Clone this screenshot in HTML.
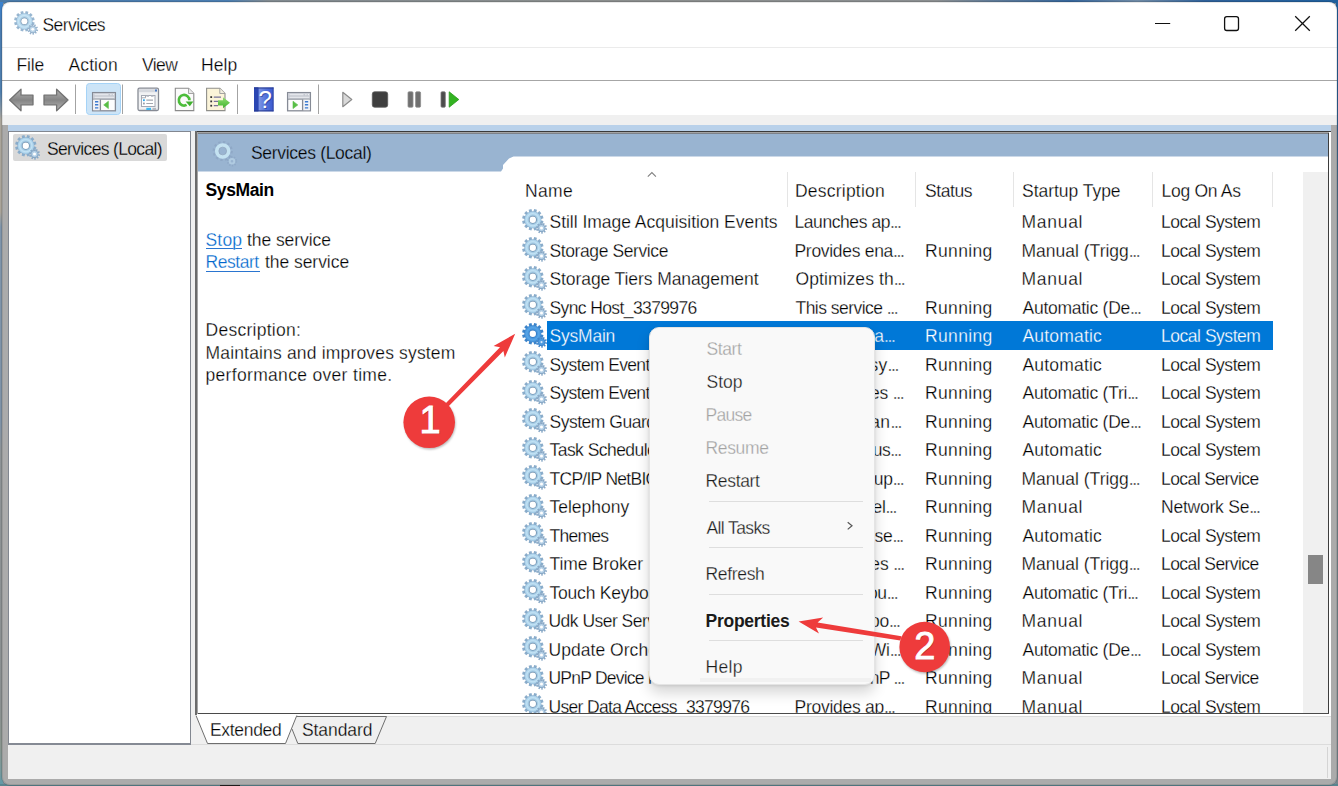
<!DOCTYPE html>
<html lang="en"><head><meta charset="utf-8"><title>Services</title>
<style>
html,body{margin:0;padding:0}
body{width:1338px;height:786px;overflow:hidden;position:relative;background:#7f8f9a;
 font-family:"Liberation Sans",sans-serif;font-size:17.5px;color:#000}
.a,.t,.gear{position:absolute}
.t{white-space:pre;line-height:20px;height:20px;-webkit-text-stroke:.26px #fff}
.m{-webkit-text-stroke-color:#f9f9f9}
.e{letter-spacing:-1.4px}
.u{}
#wpT{left:0;top:0;width:1338px;height:3px;background:linear-gradient(90deg,#4a7aa8 0,#4a7db0 17%,#80898f 20%,#8a8d8c 45%,#8a8e90 70%,#5f7a96 74%,#35659a 80%,#6f8aa5 85%,#2f6199 90%,#1f5f9c 100%)}
#wpL{left:0;top:2px;width:3px;height:784px;background:linear-gradient(180deg,#3a82cf 0,#4a7cb0 25px,#4f7fae 90px,#8796a3 108px,#aaa59b 118px,#aaa499 210px,#7f95ab 225px,#7f93a8 420px,#8e9396 450px,#8a8f90 700px,#8a968f 745px,#7a9a9c 768px,#5f99a8 784px)}
#wpR{left:1336px;top:0;width:2px;height:786px;background:linear-gradient(180deg,#1f5f9c 0,#2a5f92 100px,#4f6f88 200px,#76868c 400px,#76868c 786px)}
#wpB{left:0;top:784px;width:1338px;height:2px;background:#5a858f}
#win{left:0;top:0;width:1338px;height:786px;clip-path:inset(2px 1px 1px 2px round 8px)}
#winb{left:1px;top:1px;width:1337px;height:785px;border-radius:9px;background:rgba(0,0,0,.12)}
#wine{left:2px;top:2px;width:1335px;height:783px;border-radius:8px;border:1px solid rgba(0,0,0,.09);box-sizing:border-box}
</style></head><body>
<div class="a" id="wpT"></div><div class="a" id="wpL"></div><div class="a" id="wpR"></div><div class="a" id="wpB"></div>
<div class="a" style="left:220px;top:785px;width:20px;height:1px;background:#222"></div>
<div class="a" id="winb"></div>
<div class="a" id="win">
<!-- title, menu, toolbar -->
<div class="a" style="left:0;top:0;width:1338px;height:125px;background:#fff"></div>
<div class="a" style="left:0;top:47px;width:1338px;height:1px;background:#ebebeb"></div>
<div class="a" style="left:0;top:80px;width:1338px;height:1px;background:#a6a6a6"></div>
<div class="a" style="left:0;top:115px;width:1338px;height:10px;background:#f0f0f0"></div>
<!-- gray MDI frame -->
<div class="a" style="left:0;top:125px;width:1338px;height:661px;background:#ababab"></div>
<div class="a" style="left:8px;top:125px;width:1323px;height:654px;background:#f0f0f0"></div>
<div class="a" style="left:8px;top:125px;width:1323px;height:6px;background:#b9d1ea"></div>
<!-- tree pane -->
<div class="a" style="left:8px;top:131px;width:183px;height:614px;background:#fff;border:1px solid #828790;border-bottom:2px solid #858a94;box-sizing:border-box"></div>
<div class="a" style="left:13px;top:134px;width:154px;height:27px;background:#d9d9d9;border-radius:2px"></div>
<div class="a" style="left:386px;top:716px;width:945px;height:1px;background:#dcdcdc"></div>
<!-- status bar line -->
<div class="a" style="left:191px;top:744px;width:1140px;height:1px;background:#dcdcdc"></div>
<div class="a" style="left:1327px;top:747px;width:1px;height:31px;background:#d4d4d4"></div>
<!-- right pane -->
<div class="a" style="left:195px;top:131px;width:1136px;height:585px;background:#fff"></div>
<div class="a" style="left:195px;top:131px;width:1136px;height:1px;background:#3a3a3a"></div>
<div class="a" style="left:197px;top:132px;width:1132px;height:1px;background:#a3a3a3"></div>
<div class="a" style="left:198px;top:133px;width:1130px;height:1px;background:#7d828a"></div>
<div class="a" style="left:195px;top:131px;width:2px;height:584px;background:#6b6b6b"></div>
<div class="a" style="left:197px;top:132px;width:1px;height:582px;background:#a6a6a6"></div>
<div class="a" style="left:1328px;top:133px;width:1px;height:581px;background:#3d3d3d"></div>
<div class="a" style="left:198px;top:713px;width:1131px;height:1px;background:#4a4a4a"></div>
<!-- blue band -->
<svg class="a" style="left:198px;top:134px" width="1130" height="38" viewBox="0 0 1130 38"><path d="M0 0H1130V22.4H315.5L311 24.4L305 30.9V34.4L303 37.4H0Z" fill="#99b4d1"/></svg>
<!-- header -->
<div class="a" style="left:787px;top:172px;width:1px;height:35px;background:#e5e5e5"></div>
<div class="a" style="left:915px;top:172px;width:1px;height:35px;background:#e5e5e5"></div>
<div class="a" style="left:1013px;top:172px;width:1px;height:35px;background:#e5e5e5"></div>
<div class="a" style="left:1152px;top:172px;width:1px;height:35px;background:#e5e5e5"></div>
<div class="a" style="left:1272px;top:172px;width:1px;height:35px;background:#e5e5e5"></div>
<svg class="a" style="left:646px;top:171px" width="12" height="8" viewBox="0 0 12 8"><path d="M1.8 5.7L5.9 1.6L9.9 5.7" fill="none" stroke="#808080" stroke-width="1.1"/></svg>
<!-- scrollbar -->
<div class="a" style="left:1303px;top:172px;width:25px;height:541px;background:#f0f0f0"></div>
<div class="a" style="left:1308px;top:555px;width:15px;height:29px;background:#868686"></div>
<!-- selection -->
<div class="a" style="left:546.5px;top:321.3px;width:726px;height:28.5px;background:#0078d7"></div>
<div class="a" id="rows" style="left:0;top:0;width:1338px;height:713px;overflow:hidden">
<svg class="gear" style="left:522px;top:208.8px" width="26" height="26" viewBox="0 0 26 26"><use href="#gear"/></svg>
<svg class="gear" style="left:522px;top:237.3px" width="26" height="26" viewBox="0 0 26 26"><use href="#gear"/></svg>
<svg class="gear" style="left:522px;top:265.8px" width="26" height="26" viewBox="0 0 26 26"><use href="#gear"/></svg>
<svg class="gear" style="left:522px;top:294.3px" width="26" height="26" viewBox="0 0 26 26"><use href="#gear"/></svg>
<svg class="gear" style="left:522px;top:322.8px" width="26" height="26" viewBox="0 0 26 26"><use href="#gearS"/></svg>
<svg class="gear" style="left:522px;top:351.3px" width="26" height="26" viewBox="0 0 26 26"><use href="#gear"/></svg>
<svg class="gear" style="left:522px;top:379.8px" width="26" height="26" viewBox="0 0 26 26"><use href="#gear"/></svg>
<svg class="gear" style="left:522px;top:408.3px" width="26" height="26" viewBox="0 0 26 26"><use href="#gear"/></svg>
<svg class="gear" style="left:522px;top:436.8px" width="26" height="26" viewBox="0 0 26 26"><use href="#gear"/></svg>
<svg class="gear" style="left:522px;top:465.3px" width="26" height="26" viewBox="0 0 26 26"><use href="#gear"/></svg>
<svg class="gear" style="left:522px;top:493.8px" width="26" height="26" viewBox="0 0 26 26"><use href="#gear"/></svg>
<svg class="gear" style="left:522px;top:522.3px" width="26" height="26" viewBox="0 0 26 26"><use href="#gear"/></svg>
<svg class="gear" style="left:522px;top:550.8px" width="26" height="26" viewBox="0 0 26 26"><use href="#gear"/></svg>
<svg class="gear" style="left:522px;top:579.3px" width="26" height="26" viewBox="0 0 26 26"><use href="#gear"/></svg>
<svg class="gear" style="left:522px;top:607.8px" width="26" height="26" viewBox="0 0 26 26"><use href="#gear"/></svg>
<svg class="gear" style="left:522px;top:636.3px" width="26" height="26" viewBox="0 0 26 26"><use href="#gear"/></svg>
<svg class="gear" style="left:522px;top:664.8px" width="26" height="26" viewBox="0 0 26 26"><use href="#gear"/></svg>
<svg class="gear" style="left:522px;top:693.3px" width="26" height="26" viewBox="0 0 26 26"><use href="#gear"/></svg>
<div class="a" style="left:0;top:0;width:785px;height:713px;overflow:hidden">
<span class="t" style="left:549.5px;top:212.3px;letter-spacing:-0.02px;">Still Image Acquisition Events</span>
<span class="t" style="left:549.5px;top:240.8px;letter-spacing:-0.40px;">Storage Service</span>
<span class="t" style="left:549.5px;top:269.3px;letter-spacing:-0.09px;">Storage Tiers Management</span>
<span class="t" style="left:549.5px;top:297.8px;letter-spacing:-0.61px;">Sync Host_3379976</span>
<span class="t" style="left:549.5px;top:326.3px;letter-spacing:-0.21px;color:#fff;-webkit-text-stroke-color:#0078d7;">SysMain</span>
<span class="t" style="left:549.5px;top:354.8px;letter-spacing:-0.65px;">System Event</span>
<span class="t" style="left:549.5px;top:383.3px;letter-spacing:-0.65px;">System Event</span>
<span class="t" style="left:549.5px;top:411.8px;letter-spacing:-0.49px;">System Guard</span>
<span class="t" style="left:549.5px;top:440.3px;letter-spacing:-0.54px;">Task Schedule</span>
<span class="t" style="left:549.5px;top:468.8px;letter-spacing:-0.72px;">TCP/IP NetBIO</span>
<span class="t" style="left:549.5px;top:497.3px;letter-spacing:0.00px;">Telephony</span>
<span class="t" style="left:549.5px;top:525.8px;letter-spacing:-0.72px;">Themes</span>
<span class="t" style="left:549.5px;top:554.3px;letter-spacing:-0.11px;">Time Broker</span>
<span class="t" style="left:549.5px;top:582.8px;letter-spacing:-0.20px;">Touch Keyboa</span>
<span class="t" style="left:548.5px;top:611.3px;letter-spacing:-0.52px;">Udk User Serv</span>
<span class="t" style="left:548.5px;top:639.8px;letter-spacing:0.04px;">Update Orche</span>
<span class="t" style="left:548.5px;top:668.3px;letter-spacing:-0.77px;">UPnP Device H</span>
<span class="t" style="left:548.5px;top:696.8px;letter-spacing:-0.67px;">User Data Access_3379976</span>
</div>
<span class="t" style="left:794.5px;top:212.3px;letter-spacing:-0.43px;">Launches ap<span class="e">...</span></span>
<span class="t" style="left:1021.5px;top:212.3px;letter-spacing:0.72px;">Manual</span>
<span class="t" style="left:1161.0px;top:212.3px;letter-spacing:-0.47px;">Local System</span>
<span class="t" style="left:794.5px;top:240.8px;letter-spacing:-0.30px;">Provides ena<span class="e">...</span></span>
<span class="t" style="left:925.0px;top:240.8px;letter-spacing:0.36px;">Running</span>
<span class="t" style="left:1021.5px;top:240.8px;letter-spacing:0.00px;">Manual (Trigg<span class="e">...</span></span>
<span class="t" style="left:1161.0px;top:240.8px;letter-spacing:-0.47px;">Local System</span>
<span class="t" style="left:795.5px;top:269.3px;letter-spacing:0.08px;">Optimizes th<span class="e">...</span></span>
<span class="t" style="left:1021.5px;top:269.3px;letter-spacing:0.72px;">Manual</span>
<span class="t" style="left:1161.0px;top:269.3px;letter-spacing:-0.47px;">Local System</span>
<span class="t" style="left:795.5px;top:297.8px;letter-spacing:-0.53px;">This service <span class="e">...</span></span>
<span class="t" style="left:925.0px;top:297.8px;letter-spacing:0.36px;">Running</span>
<span class="t" style="left:1022.5px;top:297.8px;letter-spacing:-0.26px;">Automatic (De<span class="e">...</span></span>
<span class="t" style="left:1161.0px;top:297.8px;letter-spacing:-0.47px;">Local System</span>
<span class="t" style="left:794.5px;top:326.3px;letter-spacing:0.00px;color:#fff;-webkit-text-stroke-color:#0078d7;">Maintains a<span class="e">...</span></span>
<span class="t" style="left:925.0px;top:326.3px;letter-spacing:0.36px;color:#fff;-webkit-text-stroke-color:#0078d7;">Running</span>
<span class="t" style="left:1022.5px;top:326.3px;letter-spacing:0.18px;color:#fff;-webkit-text-stroke-color:#0078d7;">Automatic</span>
<span class="t" style="left:1161.0px;top:326.3px;letter-spacing:-0.47px;color:#fff;-webkit-text-stroke-color:#0078d7;">Local System</span>
<span class="t" style="left:794.5px;top:354.8px;letter-spacing:0.33px;">Monitors sy<span class="e">...</span></span>
<span class="t" style="left:925.0px;top:354.8px;letter-spacing:0.36px;">Running</span>
<span class="t" style="left:1022.5px;top:354.8px;letter-spacing:0.18px;">Automatic</span>
<span class="t" style="left:1161.0px;top:354.8px;letter-spacing:-0.47px;">Local System</span>
<span class="t" style="left:795.5px;top:383.3px;letter-spacing:-0.16px;">Coordinates <span class="e">...</span></span>
<span class="t" style="left:925.0px;top:383.3px;letter-spacing:0.36px;">Running</span>
<span class="t" style="left:1022.5px;top:383.3px;letter-spacing:-0.26px;">Automatic (Tri<span class="e">...</span></span>
<span class="t" style="left:1161.0px;top:383.3px;letter-spacing:-0.47px;">Local System</span>
<span class="t" style="left:794.5px;top:411.8px;letter-spacing:0.41px;">Monitors an<span class="e">...</span></span>
<span class="t" style="left:925.0px;top:411.8px;letter-spacing:0.36px;">Running</span>
<span class="t" style="left:1022.5px;top:411.8px;letter-spacing:-0.26px;">Automatic (De<span class="e">...</span></span>
<span class="t" style="left:1161.0px;top:411.8px;letter-spacing:-0.47px;">Local System</span>
<span class="t" style="left:794.5px;top:440.3px;letter-spacing:-0.45px;">Enables a us<span class="e">...</span></span>
<span class="t" style="left:925.0px;top:440.3px;letter-spacing:0.36px;">Running</span>
<span class="t" style="left:1022.5px;top:440.3px;letter-spacing:0.18px;">Automatic</span>
<span class="t" style="left:1161.0px;top:440.3px;letter-spacing:-0.47px;">Local System</span>
<span class="t" style="left:794.5px;top:468.8px;letter-spacing:-0.24px;">Provides sup<span class="e">...</span></span>
<span class="t" style="left:925.0px;top:468.8px;letter-spacing:0.36px;">Running</span>
<span class="t" style="left:1021.5px;top:468.8px;letter-spacing:0.00px;">Manual (Trigg<span class="e">...</span></span>
<span class="t" style="left:1161.0px;top:468.8px;letter-spacing:-0.57px;">Local Service</span>
<span class="t" style="left:794.5px;top:497.3px;letter-spacing:-0.33px;">Provides Tel<span class="e">...</span></span>
<span class="t" style="left:925.0px;top:497.3px;letter-spacing:0.36px;">Running</span>
<span class="t" style="left:1021.5px;top:497.3px;letter-spacing:0.72px;">Manual</span>
<span class="t" style="left:1161.0px;top:497.3px;letter-spacing:-0.23px;">Network Se<span class="e">...</span></span>
<span class="t" style="left:794.5px;top:525.8px;letter-spacing:-0.27px;">Provides use<span class="e">...</span></span>
<span class="t" style="left:925.0px;top:525.8px;letter-spacing:0.36px;">Running</span>
<span class="t" style="left:1022.5px;top:525.8px;letter-spacing:0.18px;">Automatic</span>
<span class="t" style="left:1161.0px;top:525.8px;letter-spacing:-0.47px;">Local System</span>
<span class="t" style="left:795.5px;top:554.3px;letter-spacing:-0.12px;">Coordinates <span class="e">...</span></span>
<span class="t" style="left:925.0px;top:554.3px;letter-spacing:0.36px;">Running</span>
<span class="t" style="left:1021.5px;top:554.3px;letter-spacing:0.00px;">Manual (Trigg<span class="e">...</span></span>
<span class="t" style="left:1161.0px;top:554.3px;letter-spacing:-0.57px;">Local Service</span>
<span class="t" style="left:794.5px;top:582.8px;letter-spacing:-0.34px;">Enables Tou<span class="e">...</span></span>
<span class="t" style="left:925.0px;top:582.8px;letter-spacing:0.36px;">Running</span>
<span class="t" style="left:1022.5px;top:582.8px;letter-spacing:-0.26px;">Automatic (Tri<span class="e">...</span></span>
<span class="t" style="left:1161.0px;top:582.8px;letter-spacing:-0.47px;">Local System</span>
<span class="t" style="left:795.5px;top:611.3px;letter-spacing:-0.26px;">Shell compo<span class="e">...</span></span>
<span class="t" style="left:925.0px;top:611.3px;letter-spacing:0.36px;">Running</span>
<span class="t" style="left:1021.5px;top:611.3px;letter-spacing:0.72px;">Manual</span>
<span class="t" style="left:1161.0px;top:611.3px;letter-spacing:-0.47px;">Local System</span>
<span class="t" style="left:794.5px;top:639.8px;letter-spacing:-0.20px;">Manages Wi<span class="e">...</span></span>
<span class="t" style="left:925.0px;top:639.8px;letter-spacing:0.36px;">Running</span>
<span class="t" style="left:1022.5px;top:639.8px;letter-spacing:-0.26px;">Automatic (De<span class="e">...</span></span>
<span class="t" style="left:1161.0px;top:639.8px;letter-spacing:-0.47px;">Local System</span>
<span class="t" style="left:796.5px;top:668.3px;letter-spacing:-0.72px;">Allows UPnP <span class="e">...</span></span>
<span class="t" style="left:925.0px;top:668.3px;letter-spacing:0.36px;">Running</span>
<span class="t" style="left:1021.5px;top:668.3px;letter-spacing:0.72px;">Manual</span>
<span class="t" style="left:1161.0px;top:668.3px;letter-spacing:-0.57px;">Local Service</span>
<span class="t" style="left:794.5px;top:696.8px;letter-spacing:-0.26px;">Provides ap<span class="e">...</span></span>
<span class="t" style="left:925.0px;top:696.8px;letter-spacing:0.36px;">Running</span>
<span class="t" style="left:1021.5px;top:696.8px;letter-spacing:0.72px;">Manual</span>
<span class="t" style="left:1161.0px;top:696.8px;letter-spacing:-0.47px;">Local System</span>
</div>
<!-- window controls -->
<svg class="a" style="left:1150px;top:10px" width="170" height="28" viewBox="1150 10 170 28" fill="none" stroke="#111" stroke-width="1.3">
<path d="M1155 23.5H1170.2" stroke-width="1.1"/>
<rect x="1224.6" y="16.6" width="13.9" height="13.9" rx="2.2"/>
<path d="M1295.2 16.2L1309.8 30.8M1309.8 16.2L1295.2 30.8" stroke-width="1.25"/>
</svg>
<!-- title icon -->
<svg class="a" style="left:14px;top:10.6px;opacity:.88" width="25" height="25" viewBox="0 0 26 26"><use href="#gear"/></svg>
<!-- tree icon -->
<svg class="a" style="left:15px;top:135px" width="26" height="26" viewBox="0 0 26 26"><use href="#gear"/></svg>
<!-- pane header icon -->
<svg class="a" style="left:210px;top:138px" width="30" height="30" viewBox="210 138 30 30" fill="none">
<circle cx="222.7" cy="151" r="9" stroke="#869fbd" stroke-opacity=".55" stroke-width="2.2" stroke-dasharray="2.3 2.41"/>
<circle cx="222.7" cy="151" r="5.8" stroke="#c4e2f1" stroke-width="3.9"/>
<circle cx="222.7" cy="151" r="3.9" stroke="#8c9fb8" stroke-opacity=".7" stroke-width=".9"/>
<circle cx="232" cy="161.3" r="4.3" stroke="#86a0bf" stroke-opacity=".55" stroke-width="1.8" stroke-dasharray="1.35 1.35"/>
<circle cx="232" cy="161.3" r="2.3" stroke="#b4cfe4" stroke-opacity=".85" stroke-width="2"/>
</svg>
<!-- toolbar -->
<svg class="a" style="left:0;top:81px" width="480" height="36" viewBox="0 81 480 36">
<defs>
<linearGradient id="ag" x1="0" y1="0" x2="0" y2="1"><stop offset="0" stop-color="#b2b2b2"/><stop offset=".5" stop-color="#858585"/><stop offset="1" stop-color="#b8b8b8"/></linearGradient>
<linearGradient id="hb" x1="0" y1="0" x2="1" y2="0"><stop offset="0" stop-color="#2a46b2"/><stop offset=".22" stop-color="#2a46b2"/><stop offset=".24" stop-color="#7d95e4"/><stop offset=".6" stop-color="#5573da"/><stop offset="1" stop-color="#3a59cf"/></linearGradient>
<linearGradient id="gr" x1="0" y1="0" x2="0" y2="1"><stop offset="0" stop-color="#92e070"/><stop offset="1" stop-color="#3fb12c"/></linearGradient>
</defs>
<!-- back / forward -->
<path d="M9.6 100L21 89.3V95.2H33V104.8H21V110.8Z" fill="url(#ag)" stroke="#727272" stroke-width="1.3" stroke-linejoin="round"/>
<path d="M68 100L56.6 89.3V95.2H44V104.8H56.6V110.8Z" fill="url(#ag)" stroke="#727272" stroke-width="1.3" stroke-linejoin="round"/>
<path d="M75.5 84.5V114M122.5 84.5V114M237.5 84.5V114M318.5 84.5V114" stroke="#a3a3a3" stroke-width="1"/>
<!-- selected show/hide tree button -->
<rect x="86.5" y="83.5" width="34" height="31" rx="3" fill="#cce4f7" stroke="#a5d3f7"/>
<g>
<rect x="92.6" y="92.6" width="22.8" height="18.2" fill="#fdfdfd" stroke="#868b96" stroke-width="1.3"/>
<rect x="93.2" y="93.2" width="21.6" height="5.6" fill="#c5c9d1"/><path d="M93 99.2H115" stroke="#868b96" stroke-width="1"/>
<path d="M94.5 94.7H108.5M94.5 97.3H114" stroke="#eef0f4" stroke-width="1.1"/><path d="M110.3 94.7H111.5M112.8 94.7H114" stroke="#eef0f4" stroke-width="1.3"/>
<rect x="93.2" y="99.7" width="6.6" height="10.5" fill="#f2f3f6"/><path d="M100.4 99.5V110.4" stroke="#868b96" stroke-width="1.3"/>
<path d="M95 101.7H98.3M95 104.8H98.3M95 107.9H98.3" stroke="#3b7ad0" stroke-width="1.4"/>
<path d="M108.4 101.2V108.6L103.7 104.9Z" fill="#58be46" stroke="#58be46" stroke-width=".6" stroke-linejoin="round"/>
</g>
<!-- properties window icon -->
<g>
<rect x="138" y="88.2" width="20.5" height="22.3" rx="1.5" fill="#f1f2f4" stroke="#868a94" stroke-width="1.3"/>
<rect x="139" y="89.2" width="18.5" height="3" fill="#d5d8de"/><rect x="155" y="89.5" width="2" height="2" fill="#4a7bc4"/>
<rect x="141.5" y="95.5" width="13.5" height="11" fill="#fff" stroke="#a4a8b3" stroke-width="1"/>
<path d="M141.5 97.8H145.5V95" stroke="#a4a8b3" fill="none"/>
<path d="M146.5 96.3H149M151 96.3H153.5" stroke="#c4c7cf" stroke-width="1.2"/>
<rect x="143" y="99.3" width="1.8" height="1.8" fill="#29a8ee"/><rect x="143" y="102.6" width="1.8" height="1.8" fill="#9aa0ab"/>
<path d="M146.3 100.2H153M146.3 103.5H153" stroke="#a3a7b0" stroke-width="1.2"/>
<rect x="146.3" y="107.8" width="4.7" height="2.2" fill="#3fb8f0"/><rect x="152.5" y="107.8" width="3.6" height="2.2" fill="#b4b7be"/>
</g>
<!-- refresh -->
<g>
<path d="M175.3 88.2H188.5L193.8 93.5V110.6H175.3Z" fill="#fbfbfb" stroke="#8b8b8b" stroke-width="1.1"/>
<path d="M188.5 88.2V93.5H193.8" fill="#e9e9e9" stroke="#9b9b9b" stroke-width=".9"/>
<path d="M189.4 100.2A5.3 5.3 0 1 0 186.6 104.9" fill="none" stroke="#4cbd3a" stroke-width="2.7"/>
<path d="M185.6 101.4H193.4L189.8 106.3Z" fill="#3fb02e"/>
</g>
<!-- export list -->
<g>
<path d="M206.6 88.2H219.8L225 93.5V110.6H206.6Z" fill="#fbf4d9" stroke="#8f8f8a" stroke-width="1.1"/>
<path d="M219.8 88.2V93.5H225" fill="#f3efe0" stroke="#9b9b9b" stroke-width=".9"/>
<rect x="210.3" y="96.2" width="1.8" height="1.8" fill="#333"/><rect x="210.3" y="100.5" width="1.8" height="1.8" fill="#333"/><rect x="210.3" y="104.8" width="1.8" height="1.8" fill="#333"/>
<path d="M213.8 97.1H221M213.8 101.4H218M213.8 105.7H218" stroke="#77739a" stroke-width="1.3"/>
<path d="M218 100.2H223V97.3L230 102.8L223 108.3V105.4H218Z" fill="url(#gr)"/>
</g>
<!-- help -->
<g>
<rect x="254" y="87.5" width="19.5" height="23.8" fill="url(#hb)"/>
<rect x="254" y="87.5" width="4.3" height="23.8" fill="#2a46b2"/>
<path d="M254 88H273.5M254 110.9H273.5" stroke="#27398c" stroke-width="1"/>
<path d="M273.1 87.5V111.3" stroke="#2c4098" stroke-width=".8"/>
<text x="266.2" y="109.1" style="font-family:'Liberation Sans',sans-serif;font-size:24px" fill="#1c2f80" fill-opacity=".55" text-anchor="middle">?</text>
<text x="265.3" y="108.3" style="font-family:'Liberation Sans',sans-serif;font-size:24px" fill="#fff" text-anchor="middle">?</text>
</g>
<!-- action pane window icon -->
<g>
<rect x="287.6" y="92.6" width="22.8" height="18.2" fill="#fdfdfd" stroke="#868b96" stroke-width="1.3"/>
<rect x="288.2" y="93.2" width="21.6" height="5.6" fill="#c5c9d1"/><path d="M288 99.2H310" stroke="#868b96" stroke-width="1"/>
<path d="M289.5 94.7H303.5M289.5 97.3H309" stroke="#eef0f4" stroke-width="1.1"/><path d="M305.3 94.7H306.5M307.8 94.7H309" stroke="#eef0f4" stroke-width="1.3"/>
<rect x="303.2" y="99.7" width="6.6" height="10.5" fill="#f2f3f6"/><path d="M302.6 99.5V110.4" stroke="#868b96" stroke-width="1.3"/>
<path d="M304.9 101.7H308.2M304.9 104.8H308.2M304.9 107.9H308.2" stroke="#3b7ad0" stroke-width="1.4"/>
<path d="M293 101.2V108.6L297.8 104.9Z" fill="#58be46" stroke="#58be46" stroke-width=".6" stroke-linejoin="round"/>
</g>
<!-- play / stop / pause / resume -->
<path d="M342.8 92.3L351.8 99.5L342.8 106.7Z" fill="#d9d9d9" stroke="#8c8c8c" stroke-width="1.2" stroke-linejoin="round"/>
<rect x="372.3" y="91.8" width="15.4" height="15.4" rx="2.2" fill="#3f3f3f" stroke="#5a5a5a" stroke-width=".8"/>
<rect x="408" y="91.8" width="5" height="15.4" rx="1" fill="#6f6f6f" stroke="#8e8e8e" stroke-width=".8"/><rect x="415.6" y="91.8" width="5" height="15.4" rx="1" fill="#6f6f6f" stroke="#8e8e8e" stroke-width=".8"/>
<rect x="441" y="91.8" width="4.3" height="15.4" rx="1" fill="#4c4c4c" stroke="#777" stroke-width=".8"/>
<path d="M449.2 91.8L458.8 99.5L449.2 107.2Z" fill="#33b321" stroke="#2a9a1a" stroke-width=".8" stroke-linejoin="round"/>
</svg>
<!-- tabs -->
<svg class="a" style="left:190px;top:714px" width="210" height="32" viewBox="190 714 210 32">
<path d="M296.5 716.5L298 716.5L386.5 716.5L375.2 743.5H297.8L292 729" fill="#f0f0f0" stroke="#6e6e6e" stroke-width="1"/>
<path d="M195.8 715L207.3 743.5H285.5L297 715Z" fill="#fff"/>
<path d="M196 715.5L207.5 743.5H285.5L296.8 715.5" fill="none" stroke="#6e6e6e" stroke-width="1"/>
</svg>
<div class="a" style="left:206px;top:248px;width:36px;height:1px;background:#2a75d0"></div>
<div class="a" style="left:206px;top:271px;width:54px;height:1px;background:#2a75d0"></div>
<span class="t" style="left:42.5px;top:14.8px;letter-spacing:-0.57px;">Services</span>
<span class="t" style="left:16.5px;top:54.8px;letter-spacing:-0.18px;">File</span>
<span class="t" style="left:68.5px;top:54.8px;letter-spacing:0.11px;">Action</span>
<span class="t" style="left:142.0px;top:54.8px;letter-spacing:-0.60px;">View</span>
<span class="t" style="left:201.0px;top:54.8px;letter-spacing:0.12px;">Help</span>
<span class="t" style="left:47.0px;top:138.8px;letter-spacing:-0.66px;-webkit-text-stroke-color:#d9d9d9;">Services (Local)</span>
<span class="t" style="left:251.0px;top:142.7px;letter-spacing:-0.31px;-webkit-text-stroke-color:#99b4d1;">Services (Local)</span>
<span class="t" style="left:205.5px;top:180.2px;letter-spacing:-0.39px;font-weight:bold;-webkit-text-stroke-width:0;">SysMain</span>
<span class="t u" style="left:205.5px;top:229.6px;letter-spacing:0.18px;color:#0066cc;">Stop</span>
<span class="t" style="left:247.0px;top:229.6px;letter-spacing:-0.07px;">the service</span>
<span class="t u" style="left:205.5px;top:252.2px;letter-spacing:-0.45px;color:#0066cc;">Restart</span>
<span class="t" style="left:265.0px;top:252.2px;letter-spacing:-0.05px;">the service</span>
<span class="t" style="left:205.5px;top:320.2px;letter-spacing:0.26px;">Description:</span>
<span class="t" style="left:205.5px;top:342.8px;letter-spacing:0.17px;">Maintains and improves system</span>
<span class="t" style="left:205.5px;top:365.0px;letter-spacing:0.32px;">performance over time.</span>
<span class="t" style="left:525.0px;top:181.0px;letter-spacing:0.36px;">Name</span>
<span class="t" style="left:795.0px;top:181.0px;letter-spacing:0.22px;">Description</span>
<span class="t" style="left:925.0px;top:181.0px;letter-spacing:-0.40px;">Status</span>
<span class="t" style="left:1022.0px;top:181.0px;letter-spacing:-0.03px;">Startup Type</span>
<span class="t" style="left:1161.5px;top:181.0px;letter-spacing:-0.29px;">Log On As</span>
<span class="t" style="left:210.0px;top:720.4px;letter-spacing:-0.31px;">Extended</span>
<span class="t" style="left:302.0px;top:720.4px;letter-spacing:-0.08px;-webkit-text-stroke-color:#f0f0f0;">Standard</span>
<div class="a" id="wine"></div>
</div>
<!-- context menu -->
<div class="a" style="left:649px;top:327px;width:226px;height:358px;background:#f9f9f9;border:1px solid #e4e4e4;box-sizing:border-box;border-radius:10px;box-shadow:0 8px 14px rgba(0,0,0,.16),0 1px 3px rgba(0,0,0,.10)"></div>
<div class="a" style="left:700px;top:678px;width:171px;height:4px;background:#f1f1f1"></div>
<div class="a" style="left:709px;top:501px;width:154px;height:1px;background:#dedede"></div>
<div class="a" style="left:709px;top:547px;width:154px;height:1px;background:#dedede"></div>
<div class="a" style="left:709px;top:594px;width:154px;height:1px;background:#dedede"></div>
<div class="a" style="left:709px;top:640px;width:154px;height:1px;background:#dedede"></div>
<svg class="a" style="left:845px;top:519px" width="8" height="12" viewBox="0 0 8 12"><path d="M2.7 3.3L7 6.7L2.7 10.4" fill="none" stroke="#555" stroke-width="1.2"/></svg>
<span class="t m" style="left:706.5px;top:339.4px;letter-spacing:-0.40px;color:#a3a3a3;">Start</span>
<span class="t m" style="left:706.5px;top:372.3px;letter-spacing:0.00px;color:#1b1b1b;">Stop</span>
<span class="t m" style="left:705.5px;top:404.9px;letter-spacing:-0.72px;color:#a3a3a3;">Pause</span>
<span class="t m" style="left:705.5px;top:438.3px;letter-spacing:-0.36px;color:#a3a3a3;">Resume</span>
<span class="t m" style="left:705.5px;top:471.1px;letter-spacing:-0.33px;color:#1b1b1b;">Restart</span>
<span class="t m" style="left:706.5px;top:517.5px;letter-spacing:-0.61px;color:#1b1b1b;">All Tasks</span>
<span class="t m" style="left:705.5px;top:564.0px;letter-spacing:-0.33px;color:#1b1b1b;">Refresh</span>
<span class="t m" style="left:705.5px;top:610.8px;letter-spacing:-0.26px;color:#1b1b1b;font-weight:bold;-webkit-text-stroke-width:0;">Properties</span>
<span class="t m" style="left:705.5px;top:657.0px;letter-spacing:0.30px;color:#1b1b1b;">Help</span>
<!-- annotations -->
<svg class="a" style="left:0;top:0" width="1338" height="786" viewBox="0 0 1338 786">
<defs><filter id="cs" x="-20%" y="-20%" width="140%" height="140%"><feGaussianBlur stdDeviation="1.2"/></filter></defs>
<g fill="#000" fill-opacity=".28" filter="url(#cs)"><circle cx="430" cy="423.8" r="25.6"/><circle cx="925.5" cy="648.5" r="25.2"/></g>
<g fill="#ee3b3b">
<path d="M445.3 403.8L500 347.3L493.6 346L515.2 333.8L504.8 357.4L503.4 350.9L448.4 406.4Z"/>
<circle cx="429.2" cy="422.3" r="25.8"/>
<path d="M901.5 636.2L817.6 622.6L823.2 617.4L798.6 621.4L819 633.4L816 627.4L900.3 640.6Z"/>
<circle cx="924.7" cy="647" r="25.3"/>
</g>
<g style="font-family:'Liberation Sans',sans-serif;font-size:38px" text-anchor="middle">
<text x="431" y="434.2" fill="#7a1414" fill-opacity=".45">1</text><text x="925.6" y="660" fill="#7a1414" fill-opacity=".45">2</text>
<text x="430.1" y="433.3" fill="#fff" stroke="#fff" stroke-width=".9">1</text><text x="924.7" y="659.1" fill="#fff" stroke="#fff" stroke-width=".9">2</text></g>
</svg>
<svg width="0" height="0" style="position:absolute"><defs>
<radialGradient id="gg" cx="10.8" cy="10.7" r="10.7" gradientUnits="userSpaceOnUse"><stop offset=".3" stop-color="#5f7f9f"/><stop offset=".4" stop-color="#9cc3de"/><stop offset=".56" stop-color="#c3e3f5"/><stop offset=".72" stop-color="#a8cfe9"/><stop offset=".8" stop-color="#86a9c8"/><stop offset="1" stop-color="#8fb0cd"/></radialGradient>
<radialGradient id="ggS" cx="10.8" cy="10.7" r="10.7" gradientUnits="userSpaceOnUse"><stop offset=".3" stop-color="#2b6fb8"/><stop offset=".4" stop-color="#4392da"/><stop offset=".56" stop-color="#58a6e8"/><stop offset=".72" stop-color="#4796dc"/><stop offset=".8" stop-color="#3a80c6"/><stop offset="1" stop-color="#3f88ce"/></radialGradient>
<g id="gear"><path d="M19.27 11.44L21.52 12.05L20.75 14.89L18.50 14.29L17.76 15.57L19.41 17.23L17.33 19.31L15.67 17.66L14.39 18.40L14.99 20.65L12.15 21.42L11.54 19.17L10.06 19.17L9.45 21.42L6.61 20.65L7.21 18.40L5.93 17.66L4.27 19.31L2.19 17.23L3.84 15.57L3.10 14.29L0.85 14.89L0.08 12.05L2.33 11.44L2.33 9.96L0.08 9.35L0.85 6.51L3.10 7.11L3.84 5.83L2.19 4.17L4.27 2.09L5.93 3.74L7.21 3.00L6.61 0.75L9.45 -0.02L10.06 2.23L11.54 2.23L12.15 -0.02L14.99 0.75L14.39 3.00L15.67 3.74L17.33 2.09L19.41 4.17L17.76 5.83L18.50 7.11L20.75 6.51L21.52 9.35L19.27 9.96Z" fill="url(#gg)"/><circle cx="10.8" cy="10.7" r="3.2" fill="#fff"/><path d="M23.50 19.18L25.09 19.43L24.78 20.97L23.21 20.59L22.69 21.51L23.83 22.65L22.67 23.72L21.63 22.49L20.66 22.93L20.92 24.52L19.35 24.70L19.23 23.09L18.19 22.88L17.46 24.32L16.09 23.54L16.94 22.17L16.22 21.39L14.78 22.12L14.13 20.68L15.62 20.08L15.50 19.02L13.91 18.77L14.22 17.23L15.79 17.61L16.31 16.69L15.17 15.55L16.33 14.48L17.37 15.71L18.34 15.27L18.08 13.68L19.65 13.50L19.77 15.11L20.81 15.32L21.54 13.88L22.91 14.66L22.06 16.03L22.78 16.81L24.22 16.08L24.87 17.52L23.38 18.12Z" fill="#88a8c6"/><circle cx="19.5" cy="19.1" r="3" fill="#b4d0e6"/><circle cx="19.5" cy="19.1" r="1.5" fill="#fff"/></g>
<g id="gearS"><path d="M19.27 11.44L21.52 12.05L20.75 14.89L18.50 14.29L17.76 15.57L19.41 17.23L17.33 19.31L15.67 17.66L14.39 18.40L14.99 20.65L12.15 21.42L11.54 19.17L10.06 19.17L9.45 21.42L6.61 20.65L7.21 18.40L5.93 17.66L4.27 19.31L2.19 17.23L3.84 15.57L3.10 14.29L0.85 14.89L0.08 12.05L2.33 11.44L2.33 9.96L0.08 9.35L0.85 6.51L3.10 7.11L3.84 5.83L2.19 4.17L4.27 2.09L5.93 3.74L7.21 3.00L6.61 0.75L9.45 -0.02L10.06 2.23L11.54 2.23L12.15 -0.02L14.99 0.75L14.39 3.00L15.67 3.74L17.33 2.09L19.41 4.17L17.76 5.83L18.50 7.11L20.75 6.51L21.52 9.35L19.27 9.96Z" fill="url(#ggS)"/><circle cx="10.8" cy="10.7" r="3.2" fill="#fff"/><path d="M23.50 19.18L25.09 19.43L24.78 20.97L23.21 20.59L22.69 21.51L23.83 22.65L22.67 23.72L21.63 22.49L20.66 22.93L20.92 24.52L19.35 24.70L19.23 23.09L18.19 22.88L17.46 24.32L16.09 23.54L16.94 22.17L16.22 21.39L14.78 22.12L14.13 20.68L15.62 20.08L15.50 19.02L13.91 18.77L14.22 17.23L15.79 17.61L16.31 16.69L15.17 15.55L16.33 14.48L17.37 15.71L18.34 15.27L18.08 13.68L19.65 13.50L19.77 15.11L20.81 15.32L21.54 13.88L22.91 14.66L22.06 16.03L22.78 16.81L24.22 16.08L24.87 17.52L23.38 18.12Z" fill="#3f86cc"/><circle cx="19.5" cy="19.1" r="3" fill="#4f9be0"/><circle cx="19.5" cy="19.1" r="1.1" fill="#d4e7f8"/></g>
</defs></svg>
</body></html>
